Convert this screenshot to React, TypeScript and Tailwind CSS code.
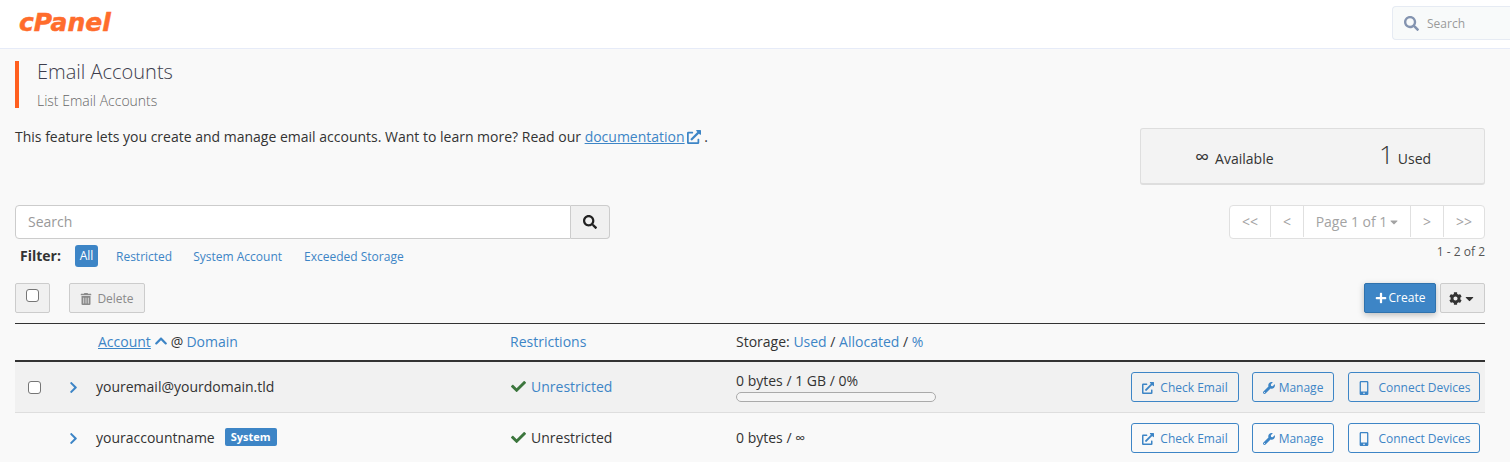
import React from 'react';
import { FaSearch, FaTrashAlt, FaPlus, FaCog, FaCaretDown, FaChevronUp, FaChevronRight, FaCheck, FaExternalLinkAlt, FaWrench, FaMobileAlt } from 'react-icons/fa';

const ActionButtons: React.FC = () => (
  <div className="flex items-center justify-end pr-[5px]">
    <button className="flex h-[30px] w-[108px] items-center justify-center gap-[6px] rounded-[3px] border border-[#3d85c6] pt-[1px] text-[12px] text-[#3d85c6]">
      <FaExternalLinkAlt size={12} />
      Check Email
    </button>
    <button className="ml-[13px] flex h-[30px] w-[82px] items-center justify-center gap-[4px] rounded-[3px] border border-[#3d85c6] pt-[1px] text-[12px] text-[#3d85c6]">
      <FaWrench size={12} />
      Manage
    </button>
    <button className="ml-[14px] flex h-[30px] w-[132px] items-center justify-center gap-[7px] rounded-[3px] border border-[#3d85c6] pt-[1px] text-[12px] text-[#3d85c6]">
      <FaMobileAlt size={14} />
      Connect Devices
    </button>
  </div>
);

const App: React.FC = () => {
  return (
    <div className="h-[462px] w-[1510px] overflow-hidden bg-[#f9f9f9] font-['Open_Sans',sans-serif] text-[14px] text-[#333]">
      <header className="flex h-[49px] items-start justify-between overflow-hidden border-b border-[#e6ebf8] bg-white">
        <div className="ml-[19px] mt-[5px] font-['DejaVu_Sans',sans-serif] text-[25px] font-bold italic leading-[36px] text-[#ff6c2c] [-webkit-text-stroke:0.5px_#ff6c2c]">cPanel</div>
        <div className="mt-[6px] flex h-[34px] w-[118px] shrink-0 items-center gap-[8px] rounded-l-[4px] border border-r-0 border-[#e6ebf3] bg-[#f8fafa] pl-[11px] pt-[1px] text-[12px] text-[#9a9a9a]">
          <FaSearch size={15} className="text-[#8494b0]" />
          Search
        </div>
      </header>

      <div className="ml-[15px] mt-[12px] flex h-[47px] flex-col border-l-4 border-[#ff5f1f] pl-[18px]">
        <h1 className="text-[20px] font-light leading-[22px] text-[#3d3d4d]">Email Accounts</h1>
        <p className="mt-[9px] text-[14px] font-light leading-[18px] text-[#666]">List Email Accounts</p>
      </div>

      <div className="mx-[25px] ml-[15px] mt-[20px] flex items-start justify-between">
        <p className="leading-[18px]">
          This feature lets you create and manage email accounts. Want to learn more? Read our{' '}
          <a className="text-[#3d85c6] underline">documentation</a>
          <FaExternalLinkAlt size={14} className="ml-[2px] inline align-[-2px] text-[#3d85c6]" /> .
        </p>
        <div className="flex h-[57px] w-[345px] items-center rounded-[3px] border border-b-2 border-[#dedede] bg-[#f3f3f3]">
          <div className="ml-[54px] flex w-[184px] items-baseline pt-[3px]">
            <span className="text-[20px] leading-none">∞</span>
            <span className="ml-[6px]">Available</span>
          </div>
          <div className="flex items-baseline pb-[2px]">
            <span className="text-[26px] font-light leading-none">1</span>
            <span className="ml-[4px]">Used</span>
          </div>
        </div>
      </div>

      <div className="mx-[25px] ml-[15px] mt-[20px] flex items-start justify-between">
        <div>
          <div className="flex h-[34px] w-[595px]">
            <div className="flex flex-1 items-center rounded-l-[4px] border border-[#ccc] bg-white pb-[1px] pl-[12px] text-[#999]">Search</div>
            <button className="flex w-[39px] items-center justify-center rounded-r-[4px] border border-l-0 border-[#ccc] bg-[#f0f0f0] text-[#222]">
              <FaSearch size={14} />
            </button>
          </div>
          <div className="ml-[5px] mt-[6px] flex h-[22px] items-center text-[12px] text-[#3d85c6]">
            <span className="w-[55px] pb-[2px] text-[14px] font-bold text-[#333]">Filter:</span>
            <span className="flex h-[22px] w-[23px] items-center justify-center rounded-[3px] bg-[#3d85c6] text-white">All</span>
            <span className="ml-[18px] pt-[1px]">Restricted</span>
            <span className="ml-[21px] pt-[1px]">System Account</span>
            <span className="ml-[22px] pt-[1px]">Exceeded Storage</span>
          </div>
        </div>
        <div className="flex flex-col items-end">
          <div className="flex h-[34px] w-[256px] rounded-[4px] border border-[#e0e0e0] bg-white pb-[1px] text-[#a3a3a3]">
            <span className="flex w-[41px] items-center justify-center border-r border-[#e0e0e0]">&lt;&lt;</span>
            <span className="flex w-[33px] items-center justify-center border-r border-[#e0e0e0]">&lt;</span>
            <span className="flex w-[107px] items-center justify-center gap-[1px] border-r border-[#e0e0e0] pl-[2px]">
              Page 1 of 1
              <FaCaretDown size={12} />
            </span>
            <span className="flex w-[33px] items-center justify-center border-r border-[#e0e0e0]">&gt;</span>
            <span className="flex flex-1 items-center justify-center">&gt;&gt;</span>
          </div>
          <div className="mt-[3px] text-[12px] leading-[20px] text-[#555]">1 - 2 of 2</div>
        </div>
      </div>

      <div className="mx-[25px] ml-[15px] mt-[16px] flex h-[30px] items-center justify-between">
        <div className="flex items-center">
          <div className="flex h-[30px] w-[35px] items-start justify-center rounded-[2px] border border-[#ccc] bg-[#f0f0f0] pt-[5px]">
            <span className="h-[13px] w-[13px] rounded-[3px] border border-[#767676] bg-white" />
          </div>
          <button className="ml-[19px] flex h-[30px] w-[76px] items-center justify-center gap-[5px] rounded-[2px] border border-[#ccc] bg-[#f0f0f0] pt-[1px] text-[12px] text-[#8a8a8a]">
            <FaTrashAlt size={12} />
            Delete
          </button>
        </div>
        <div className="flex items-center gap-[4px]">
          <button className="flex h-[30px] w-[72px] items-center justify-center gap-[2px] rounded-[2px] border border-[#2f72ad] bg-[#3d85c6] text-[12px] text-white shadow-[0_2px_6px_rgba(0,0,0,0.25)]">
            <FaPlus size={12} />
            Create
          </button>
          <button className="flex h-[30px] w-[45px] items-center justify-center gap-[1px] rounded-[2px] border border-[#ccc] bg-[#eeeeee] text-[#333]">
            <FaCog size={13} />
            <FaCaretDown size={13} />
          </button>
        </div>
      </div>

      <div className="mx-[25px] ml-[15px] mt-[10px]">
        <div className="grid h-[39px] grid-cols-[81px_414px_226px_1fr] items-center border-b-2 border-t border-[#333] pb-[2px]">
          <div />
          <div className="flex items-center pl-[2px]">
            <a className="text-[#3d85c6] underline">Account</a>
            <FaChevronUp size={14} className="ml-[3px] text-[#3d85c6]" />
            <span className="ml-[3px]">@</span>
            <a className="ml-[3px] text-[#3d85c6]">Domain</a>
          </div>
          <a className="text-[#3d85c6]">Restrictions</a>
          <div>
            Storage: <a className="text-[#3d85c6]">Used</a> / <a className="text-[#3d85c6]">Allocated</a> / <a className="text-[#3d85c6]">%</a>
          </div>
        </div>

        <div className="grid h-[51px] grid-cols-[81px_414px_226px_200px_1fr] items-center border-b border-[#dedede] bg-[#f1f1f1]">
          <div className="flex items-center pl-[13px]">
            <span className="h-[13px] w-[13px] rounded-[3px] border border-[#767676] bg-white" />
            <FaChevronRight size={13} className="ml-[26px] text-[#3d85c6]" />
          </div>
          <div className="pb-[2px]">youremail@yourdomain.tld</div>
          <div className="flex items-center gap-[5px] pb-[1px] pl-[1px] text-[#3d85c6]">
            <FaCheck size={15} className="text-[#3c763d]" />
            Unrestricted
          </div>
          <div>
            <div className="leading-[18px]">0 bytes / 1 GB / 0%</div>
            <div className="mt-[2px] h-[10px] w-[200px] rounded-[5px] border border-[#aaa] bg-[#f5f5f5]" />
          </div>
          <ActionButtons />
        </div>

        <div className="grid h-[50px] grid-cols-[81px_414px_226px_200px_1fr] items-center">
          <div className="flex items-center pl-[13px]">
            <FaChevronRight size={13} className="ml-[39px] text-[#3d85c6]" />
          </div>
          <div className="flex items-center pb-[2px]">
            youraccountname
            <span className="ml-[10px] flex h-[18px] items-center rounded-[2px] bg-[#3d85c6] px-[6px] text-[11px] font-bold text-white">System</span>
          </div>
          <div className="flex items-center gap-[5px] pb-[1px] pl-[1px]">
            <FaCheck size={15} className="text-[#3c763d]" />
            Unrestricted
          </div>
          <div className="pb-[2px]">0 bytes / ∞</div>
          <ActionButtons />
        </div>
      </div>
    </div>
  );
};

export default App;
